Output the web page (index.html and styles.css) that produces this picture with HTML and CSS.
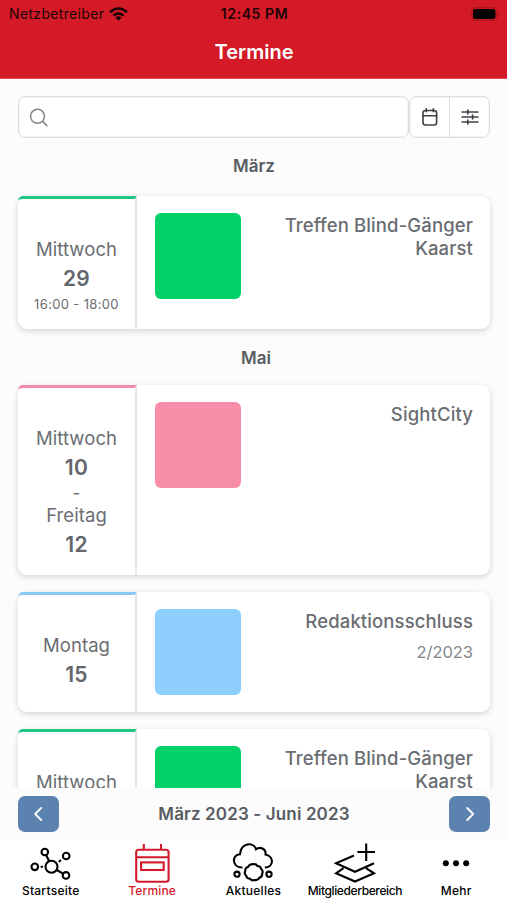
FILE: index.html
```html
<!DOCTYPE html>
<html lang="de">
<head>
<meta charset="utf-8">
<title>Termine</title>
<link rel="stylesheet" href="styles.css">
</head>
<body>
<div class="app">
  <header class="header">
    <div class="status">
      <div class="carrier"><span>Netzbetreiber</span>
        <svg width="19" height="14" viewBox="0 0 19 14" fill="none" stroke="#1d0306" stroke-width="2.6"><path d="M1 5.2Q9.5-2.2 18 5.2M4.4 8.6Q9.5 4 14.6 8.6"/><path d="M6.4 10.6Q9.5 8 12.6 10.6L9.5 13.8Z" fill="#1d0306" stroke="none"/></svg>
      </div>
      <div class="clock">12:45 PM</div>
      <div class="battery"><svg width="29" height="14" viewBox="0 0 29 14"><rect x=".7" y=".7" width="25" height="12.6" rx="4" fill="none" stroke="#a5131e"/><rect x="2" y="2" width="22.4" height="10" rx="2.5" fill="#000"/><path d="M27 5q1.6 2 0 4z" fill="#7a0d16"/></svg></div>
    </div>
    <h1 class="title">Termine</h1>
  </header>
  <main class="content">
    <div class="toolbar">
      <div class="search"><svg width="20" height="20" viewBox="0 0 20 20" fill="none" stroke="#868a8f" stroke-width="1.6" stroke-linecap="round"><circle cx="8.5" cy="8.3" r="7"/><path d="M13.6 13.4L17.8 17.6"/></svg></div>
      <div class="actions">
        <button class="action" aria-label="Kalender"><svg width="18" height="20" viewBox="0 0 18 20" fill="none" stroke="#3c4045" stroke-width="1.6" stroke-linecap="round"><rect x="2" y="3.5" width="13.6" height="14.5" rx="2.5"/><path d="M2 8.8H15.6M5.3 1.8V4.8M12.3 1.8V4.8"/></svg></button>
        <button class="action" aria-label="Filter"><svg width="18" height="18" viewBox="0 0 18 18" fill="none" stroke="#3c4045" stroke-width="1.7" stroke-linecap="round"><path d="M1.2 4H5.7M7.6 4H16.8M1.2 9H10.4M12.4 9H16.8M1.2 14H5.7M7.6 14H16.8M6.8 2.2V5.8M11.6 7.2V10.8M6.8 12.2V15.8"/></svg></button>
      </div>
    </div>
    <h2 class="month first">März</h2>
    <article class="card green treffen">
      <div class="date"><span class="day">Mittwoch</span><b class="num">29</b><span class="time">16:00 - 18:00</span></div>
      <div class="body"><div class="swatch"></div><div class="text"><h3>Treffen Blind-Gänger Kaarst</h3></div></div>
    </article>
    <h2 class="month second">Mai</h2>
    <article class="card pink sight">
      <div class="date"><span class="day">Mittwoch</span><b class="num">10</b><span class="dash">-</span><span class="day">Freitag</span><b class="num">12</b></div>
      <div class="body"><div class="swatch"></div><div class="text"><h3>SightCity</h3></div></div>
    </article>
    <article class="card blue redaktion">
      <div class="date"><span class="day">Montag</span><b class="num">15</b></div>
      <div class="body"><div class="swatch"></div><div class="text"><h3>Redaktionsschluss</h3><p>2/2023</p></div></div>
    </article>
    <article class="card green treffen">
      <div class="date"><span class="day">Mittwoch</span></div>
      <div class="body"><div class="swatch"></div><div class="text"><h3>Treffen Blind-Gänger Kaarst</h3></div></div>
    </article>
  </main>
  <div class="range">
    <button class="step" aria-label="Zurück"><svg width="16" height="18" viewBox="0 0 16 18"><path d="M10.2 3L4.2 9L10.2 15"/></svg></button>
    <strong>März 2023 - Juni 2023</strong>
    <button class="step" aria-label="Weiter"><svg width="16" height="18" viewBox="0 0 16 18"><path d="M5.2 3L11.2 9L5.2 15"/></svg></button>
  </div>
  <nav class="tabs">
    <a class="tab"><svg width="42" height="42" viewBox="0 0 42 42"><circle cx="21.5" cy="23.8" r="6"/><circle cx="14.8" cy="9" r="3.3"/><circle cx="36.2" cy="13" r="3.3"/><circle cx="4.8" cy="23.8" r="3.3"/><circle cx="36" cy="32.4" r="3.3"/><path d="M16.2 12L19.1 18.2M26.8 27L33 30.7M10.7 23.8H13M28.7 19L31 17.2"/></svg><span>Startseite</span></a>
    <a class="tab active"><svg width="42" height="42" viewBox="0 0 42 42"><rect x="5.2" y="6.8" width="32.4" height="32" rx="2.5"/><path d="M5.2 14.2H37.6M12.8 1V6.5M30 1V6.5"/><rect x="10.1" y="19.4" width="22.6" height="7.6"/></svg><span>Termine</span></a>
    <a class="tab"><svg width="42" height="42" viewBox="0 0 42 42"><path d="M10.5 24.5C-.5 24.5-.4 11.5 8 11.3C9-.5 21.5-1.3 24 6.2C28.5 3 34.5 6.5 33.5 11.5C42.5 13.5 41.8 24.5 32.8 24.5"/><path d="M21.2 21.2q3-.5 4.2 1.8q3.2 0 3.8 3q2.4 2 .9 4.7q.4 3.2-2.7 4q-1.5 3-4.4 2.2q-3 1.3-4.9-1.1q-3.2 0-3.9-3q-2.4-2-.9-4.7q-.4-3.2 2.7-4q1.6-3.2 5.2-2.9z"/><circle cx="5" cy="31.2" r="2.6"/><circle cx="37" cy="31.2" r="2.6"/></svg><span>Aktuelles</span></a>
    <a class="tab wide"><svg width="42" height="42" viewBox="0 0 42 42"><path d="M20 12.5L2 20.3L21 28.8L40 20.3M9.5 25.2L2 30.3L21 38.5L40 30.3L32 25.2M32.2 .5V18M23.4 9H41"/></svg><span>Mitgliederbereich</span></a>
    <a class="tab"><svg width="42" height="42" viewBox="0 0 42 42"><g fill="#000" stroke="none"><circle cx="10.8" cy="20.2" r="3"/><circle cx="21" cy="20.2" r="3"/><circle cx="31.2" cy="20.2" r="3"/></g></svg><span>Mehr</span></a>
  </nav>
</div>
</body>
</html>
```
FILE: styles.css
```css
* { box-sizing: border-box; }
body { margin: 0; font-family: Inter, "Liberation Sans", sans-serif; color: #6a6d72; background: #fcfcfc; }
h1, h2, h3, p { margin: 0; }
button { margin: 0; padding: 0; border: 0; background: none; }
svg { display: block; }
.app { width: 507px; height: 900px; overflow: hidden; display: flex; flex-direction: column; }
.header { flex: none; height: 79px; background: #d31a26; border-bottom: 1px solid #df4a54; }
.status { display: grid; grid-template-columns: 1fr auto 1fr; align-items: center; height: 27px; padding: 0 7px 0 9px; color: #1d0306; }
.carrier { display: flex; align-items: center; gap: 5px; font-size: 14px; letter-spacing: .34px; }
.clock { font-size: 14px; font-weight: 600; letter-spacing: .6px; }
.battery { justify-self: end; }
.title { height: 50px; line-height: 51px; text-align: center; color: #fff; font-size: 20px; font-weight: 600; letter-spacing: 0; padding-left: 1px; }
.content { flex: none; height: 709px; padding: 17px 17px 0 18px; overflow: hidden; }
.toolbar { display: flex; height: 42px; }
.search { flex: 1; border: 1.5px solid #dedfe0; border-radius: 7px; background: #fff; padding: 11px 10px; box-shadow: inset 0 0 0 .5px #e8e9ea; }
.actions { display: flex; width: 81px; border: 1px solid #dedfe0; border-radius: 7px; background: #fff; box-shadow: inset 0 0 0 .5px #e8e9ea; }
.action { flex: 1; display: grid; place-items: center; }
.action + .action { border-left: 1.5px solid #dcddde; }
.month { text-align: center; font-size: 17px; line-height: 24px; font-weight: 600; color: #585c62; }
.first { margin: 16px 0 18px; }
.second { margin: 17px 0 15px; padding-left: 4px; }
.card { display: flex; background: #fff; border-radius: 9px; box-shadow: 0 2px 6px rgba(0,0,0,.16); }
.card + .card { margin-top: 17px; }
.treffen { height: 133px; }
.sight { height: 190px; }
.redaktion { height: 120px; }
.green { --swatch: #02d167; --line: #20c684; }
.pink { --swatch: #f88da9; --line: #f18aa9; }
.blue { --swatch: #8ecffe; --line: #89c7f5; }
.date { flex: none; width: 119px; border-top: 3px solid var(--line); border-right: 2px solid #e6e6e7; border-top-left-radius: 5px; padding-top: 37px; display: flex; flex-direction: column; align-items: center; }
.day { font-size: 18.5px; line-height: 26px; letter-spacing: .08px; }
.num { font-size: 21px; line-height: 33px; font-weight: 600; color: #63666b; letter-spacing: .3px; }
.time { font-size: 13px; line-height: 18px; letter-spacing: .35px; }
.dash { font-size: 17px; line-height: 18px; }
.body { flex: 1; display: flex; justify-content: space-between; padding: 17px 17px 0 18px; }
.swatch { width: 86px; height: 86px; border-radius: 6px; background: var(--swatch); }
.text { width: 200px; text-align: right; padding-top: 1px; }
.text h3 { font-size: 18.5px; line-height: 23px; font-weight: 500; letter-spacing: .12px; }
.text p { margin-top: 8px; font-size: 16.5px; line-height: 23px; color: #85878b; letter-spacing: -.05px; }
.range { flex: none; height: 52px; padding: 0 17px 0 18px; display: flex; align-items: center; justify-content: space-between; }
.range strong { font-size: 17px; font-weight: 600; color: #585c62; letter-spacing: .14px; }
.step { width: 41px; height: 36px; border-radius: 7px; background: #5c82af; display: grid; place-items: center; }
.step path { fill: none; stroke: #fff; stroke-width: 1.8; stroke-linecap: round; stroke-linejoin: round; }
.tabs { flex: none; height: 60px; padding-top: 3px; display: grid; grid-template-columns: repeat(5, 1fr); background: #fff; color: #000; }
.tab { display: flex; flex-direction: column; align-items: center; min-width: 0; }
.tab svg { fill: none; stroke: currentColor; stroke-width: 2.1; }
.tab span { font-size: 12px; line-height: 12px; font-weight: 500; white-space: nowrap; letter-spacing: .25px; }
.tab.active span { letter-spacing: .15px; }
.tab.wide span { letter-spacing: -.38px; }
.active { color: #d31a2b; }
```
